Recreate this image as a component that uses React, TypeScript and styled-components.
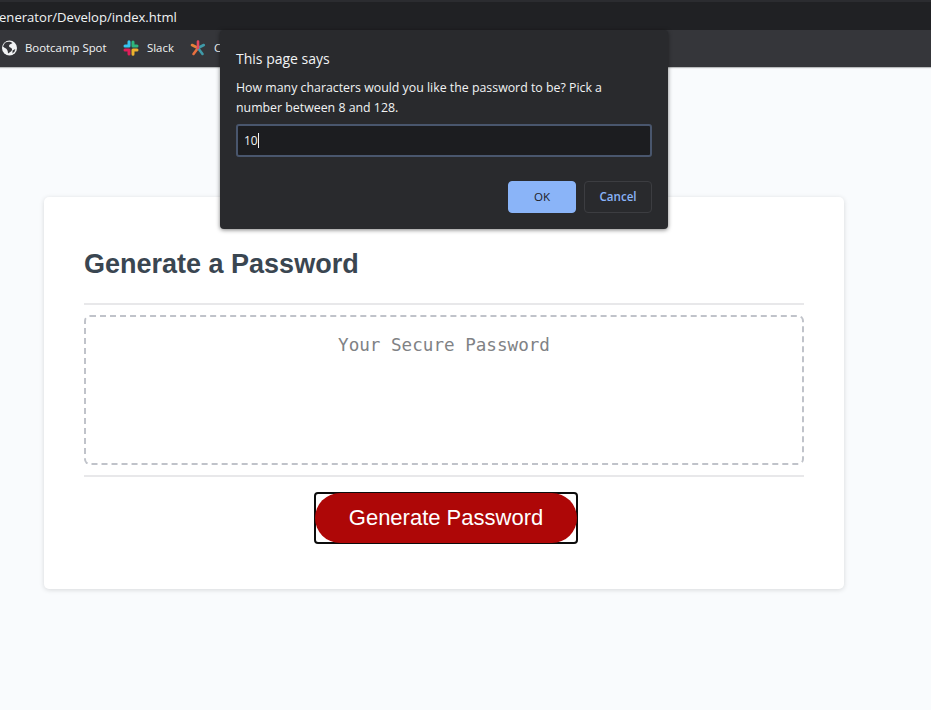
import React from "react";
import styled, { createGlobalStyle } from "styled-components";

const Global = createGlobalStyle`
  html, body { margin: 0; padding: 0; background: #f9fbfd; }
  * { box-sizing: border-box; }
`;
const Page = styled.div`
  position: relative;
  width: 931px;
  height: 710px;
  overflow: hidden;
  background: #f9fbfd;
  font-family: "Liberation Sans", Arial, sans-serif;
`;
const UrlBar = styled.div`
  height: 30px;
  padding-top: 2px;
  background: #202124;
  border-top: 2px solid #2b2c30;
  color: #f1f3f4;
  font: 13.1px/26px "Open Sans", "Noto Sans", sans-serif;
  overflow: hidden;
  white-space: nowrap;
  text-indent: -1px;
`;
const Bookmarks = styled.div`
  height: 37px;
  background: #35363a;
  display: flex;
  align-items: center;
  padding: 0 0 2px 2px;
  box-shadow: 0 1px 1px rgba(0, 0, 0, 0.25);
`;
const Bookmark = styled.div<{ $w: number }>`
  flex: none;
  width: ${(p) => p.$w}px;
  display: flex;
  align-items: center;
  gap: 8px;
  color: #f1f3f4;
  font: 11.4px/16px "Open Sans", "Noto Sans", sans-serif;
  white-space: nowrap;
  overflow: hidden;
  svg { flex: none; }
`;
const Main = styled.main`
  padding: 130px 87px 0 44px;
`;
const Card = styled.section`
  height: 392px;
  background: #fff;
  border-radius: 5px;
  box-shadow: 0 1px 5px rgba(0, 0, 0, 0.14);
  padding: 0 40px;
  display: flex;
  flex-direction: column;
`;
const Title = styled.h2`
  margin: 0;
  height: 108px;
  padding-top: 49px;
  font-size: 27px;
  line-height: 36px;
  font-weight: 700;
  color: #3a4651;
  border-bottom: 2px solid #e8e8ea;
`;
const Output = styled.div`
  margin-top: 10px;
  height: 150px;
  border: 2px dashed #c0c3ca;
  border-radius: 6px;
  padding-top: 17px;
  text-align: center;
  font: 17.6px/22px "DejaVu Sans Mono", monospace;
  color: #808285;
`;
const Actions = styled.div`
  margin-top: 10px;
  border-top: 2px solid #e8e8ea;
  padding-top: 15px;
  display: flex;
  justify-content: center;
`;
const GenerateButton = styled.button`
  margin-left: 4px;
  width: 264px;
  height: 52px;
  padding: 0;
  border: 2px solid #0c0c0c;
  border-radius: 4px;
  background: transparent;
  position: relative;
  color: #fff;
  font: 22px/48px "Liberation Sans", Arial, sans-serif;
  &::before {
    content: "";
    position: absolute;
    inset: -1px;
    border-radius: 26px;
    background: #ae0707;
  }
  span { position: relative; }
`;
const Dialog = styled.div`
  position: absolute;
  left: 220px;
  top: 30px;
  width: 448px;
  height: 199px;
  background: #292a2d;
  border-radius: 4px;
  box-shadow: 0 1px 4px rgba(0, 0, 0, 0.5);
  padding: 20px 16px 0;
  color: #f1f3f4;
  font-family: "Open Sans", "Noto Sans", sans-serif;
`;
const DialogTitle = styled.div`
  font-size: 14px;
  line-height: 18px;
`;
const DialogText = styled.div`
  margin-top: 10px;
  font-size: 12.35px;
  line-height: 20px;
  width: 400px;
`;
const Field = styled.div`
  margin-top: 6px;
  height: 33px;
  background: #1c1d20;
  border: 2px solid #49566d;
  border-radius: 3px;
  padding-left: 6px;
  font-size: 12px;
  line-height: 28px;
  display: flex;
  align-items: center;
`;
const Caret = styled.i`
  display: block;
  width: 1px;
  height: 15px;
  background: #f1f3f4;
`;
const DialogActions = styled.div`
  margin-top: 24px;
  display: flex;
  justify-content: flex-end;
  gap: 8px;
`;
const DialogButton = styled.button<{ $primary?: boolean }>`
  width: 68px;
  height: 32px;
  padding: 0 0 2px;
  border-radius: 4px;
  font-family: "Open Sans", "Noto Sans", sans-serif;
  font-size: 11.6px;
  font-weight: ${(p) => (p.$primary ? 400 : 600)};
  border: 1px solid ${(p) => (p.$primary ? "#8ab4f8" : "#3c3d41")};
  background: ${(p) => (p.$primary ? "#8ab4f8" : "#292a2d")};
  color: ${(p) => (p.$primary ? "#202124" : "#8ab4f8")};
`;

const Globe = () => (
  <svg width="15" height="16" viewBox="0 0 15 16">
    <circle cx="7.5" cy="8" r="7.5" fill="#f1f3f4" />
    <path d="M3.5 2.5C5.5 1.5 8.5 1.5 10.5 3 9 4 7 4.5 7 6 7 7.5 9.5 7.5 10 9 10.5 11 8 12 6 13.5 6 11.5 5.5 9.5 4 8.5 3 8 2 7.5 1 6.5 1.5 5 2.5 3.5 3.5 2.5Z" fill="#35363a" />
    <path d="M10.5 10.5 13.3 9 12.5 11.5 10.5 13.5Z" fill="#35363a" />
  </svg>
);
const SlackIcon = () => (
  <svg width="16" height="16" viewBox="0 0 16 16" fill="none" strokeWidth="3" strokeLinecap="round">
    <path d="M6 1.8V6H2" stroke="#36c5f0" strokeLinejoin="round" />
    <path d="M14 6H10V2" stroke="#2eb67d" strokeLinejoin="round" />
    <path d="M10 14.2V10H14" stroke="#ecb22e" strokeLinejoin="round" />
    <path d="M2 10H6V14" stroke="#e01e5a" strokeLinejoin="round" />
  </svg>
);
const Asterisk = () => (
  <svg width="16" height="16" viewBox="0 0 16 16" fill="none" strokeWidth="2.6" strokeLinecap="round">
    <path d="M8 8 2 5" stroke="#e8803a" />
    <path d="M8 8 3.5 14" stroke="#e8703f" />
    <path d="M8 8 13.8 5" stroke="#3f9aa8" />
    <path d="M8 8 12.5 14" stroke="#3f9aa8" />
    <path d="M8 8V1.5" stroke="#e2495f" />
  </svg>
);

export default function App() {
  return (
    <Page>
      <Global />
      <UrlBar>enerator/Develop/index.html</UrlBar>
      <Bookmarks>
        <Bookmark $w={121}><Globe />Bootcamp Spot</Bookmark>
        <Bookmark $w={67}><SlackIcon />Slack</Bookmark>
        <Bookmark $w={30}><Asterisk />C</Bookmark>
      </Bookmarks>
      <Main>
        <Card>
          <Title>Generate a Password</Title>
          <Output>Your Secure Password</Output>
          <Actions>
            <GenerateButton><span>Generate Password</span></GenerateButton>
          </Actions>
        </Card>
      </Main>
      <Dialog>
        <DialogTitle>This page says</DialogTitle>
        <DialogText>How many characters would you like the password to be? Pick a number between 8 and 128.</DialogText>
        <Field>10<Caret /></Field>
        <DialogActions>
          <DialogButton $primary>OK</DialogButton>
          <DialogButton>Cancel</DialogButton>
        </DialogActions>
      </Dialog>
    </Page>
  );
}
